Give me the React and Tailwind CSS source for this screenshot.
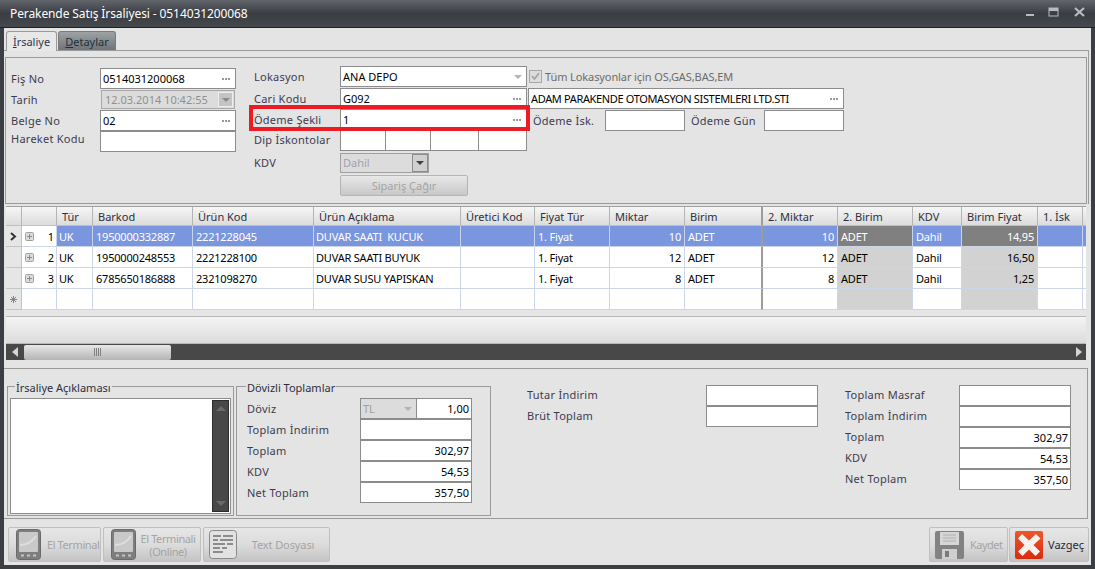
import React from 'react';

const fontCls = "font-['Noto_Sans','Liberation_Sans',sans-serif] text-[11px] leading-none";

function Dots({ color = 'bg-[#9a9a9a]' }) {
  return (
    <span className="ml-auto mr-[5px] flex gap-[1px]">
      <i className={`block w-[2px] h-[2px] ${color}`} />
      <i className={`block w-[2px] h-[2px] ${color}`} />
      <i className={`block w-[2px] h-[2px] ${color}`} />
    </span>
  );
}

function Input({ className = '', text = '', dots = false, right = false, arrow = false }) {
  return (
    <div className={`h-[21px] border border-[#8c8c8c] bg-white flex items-center pl-[2px] text-black ${className}`}>
      {right ? <span className="ml-auto mr-[2px]">{text}</span> : <span className="whitespace-nowrap">{text}</span>}
      {dots && <Dots />}
      {arrow && <span className="ml-auto mr-[4px] w-0 h-0 border-x-[4px] border-x-transparent border-t-[4px] border-t-[#b4b4b4]" />}
    </div>
  );
}

function Label({ className = '', children }) {
  return <div className={`text-[#3c3c50] tracking-[0.25px] whitespace-nowrap pb-[1px] ${className}`}>{children}</div>;
}

const cols = 'grid-cols-[16px_35px_36px_100px_121px_147px_74px_75px_75px_78px_75px_75px_49px_76px_45px_3px]';
const headers = ['', '', 'Tür', 'Barkod', 'Ürün Kod', 'Ürün Açıklama', 'Üretici Kod', 'Fiyat Tür', 'Miktar', 'Birim', '2. Miktar', '2. Birim', 'KDV', 'Birim Fiyat', '1. İsk', ''];
const rows = [
  ['1', '1950000332887', '2221228045', 'DUVAR SAATI  KUCUK', '10', '14,95'],
  ['2', '1950000248553', '2221228100', 'DUVAR SAATI BUYUK', '12', '16,50'],
  ['3', '6785650186888', '2321098270', 'DUVAR SUSU YAPISKAN', '8', '1,25'],
];

function Cell({ children, sel, right, gray, thick, className = '' }) {
  const bg = gray ? (sel ? 'bg-[#808080]' : 'bg-[#d2d2d2]') : sel ? 'bg-[#7a96de]' : 'bg-white';
  const bc = thick ? 'border-r-[2px] border-r-[#9c9c9c]' : sel ? 'border-r border-r-[#c8d4ee]' : 'border-r border-r-[#cdd6e6]';
  return (
    <div className={`h-[21px] border-b border-b-[#cdd6e6] flex items-center px-[3px] whitespace-pre overflow-hidden tracking-[-0.2px] ${bc} ${bg} ${sel ? 'text-white' : 'text-black'} ${right ? 'justify-end' : ''} ${className}`}>
      {children}
    </div>
  );
}

function Plus() {
  return (
    <svg width="9" height="9" viewBox="0 0 9 9" className="shrink-0">
      <rect x="0.5" y="0.5" width="8" height="8" rx="1" fill="#dcdcdc" stroke="#a0a0a0" />
      <path d="M2 4.500h5M4.500 2v5" stroke="#8a8a8a" />
    </svg>
  );
}

function DataRow({ r }) {
  const sel = r[0] === '1';
  return (
    <>
      <div className="h-[21px] border-r border-b border-[#c4c4c4] bg-[#e6e6e6] flex items-center justify-center">
        {sel && (
          <svg width="7" height="9" viewBox="0 0 7 9"><path d="M1 1l4 3.500L1 8" fill="none" stroke="#333" strokeWidth="2" /></svg>
        )}
      </div>
      <div className="h-[21px] border-r border-b border-[#cdd6e6] bg-white flex items-center pl-[3px] pr-[2px] text-black">
        <Plus />
        <span className="ml-auto">{r[0]}</span>
      </div>
      <Cell sel={sel} className="pl-[2px]">UK</Cell>
      <Cell sel={sel}>{r[1]}</Cell>
      <Cell sel={sel}>{r[2]}</Cell>
      <Cell sel={sel} className="pl-[2px]">{r[3]}</Cell>
      <Cell sel={sel} />
      <Cell sel={sel}>1. Fiyat</Cell>
      <Cell sel={sel} right>{r[4]}</Cell>
      <Cell sel={sel} thick>ADET</Cell>
      <Cell sel={sel} right>{r[4]}</Cell>
      <Cell sel={sel} gray>ADET</Cell>
      <Cell sel={sel}>Dahil</Cell>
      <Cell sel={sel} gray right>{r[5]}</Cell>
      <Cell sel={sel} />
      <Cell sel={sel} />
    </>
  );
}

function Device() {
  return (
    <svg width="25" height="31" viewBox="0 0 25 31" className="shrink-0">
      <rect x="0.5" y="0.5" width="24" height="30" rx="3" fill="#7e7e7e" stroke="#6a6a6a" />
      <rect x="3" y="3" width="19" height="20" rx="1" fill="#c9c9c9" />
      <path d="M4 16c6 0 12-3 16-9" stroke="#dedede" strokeWidth="2" fill="none" />
      <path d="M5 26.500h3M11 26.500h3M17 26.500h3" stroke="#c4c4c4" strokeWidth="2" />
    </svg>
  );
}

function TextDoc() {
  return (
    <svg width="28" height="29" viewBox="0 0 28 29" className="shrink-0">
      <rect x="0.5" y="0.5" width="27" height="28" rx="3" fill="#e2e2e2" stroke="#8a8a8a" />
      <path d="M4 6h8M14 6h10M4 10h5M11 10h13M4 14h12M18 14h6M4 18h7M13 18h5M4 22h10" stroke="#8c8c8c" strokeWidth="2" />
    </svg>
  );
}

function Floppy() {
  return (
    <svg width="29" height="28" viewBox="0 0 29 28" className="shrink-0">
      <path d="M2 0h25a2 2 0 0 1 2 2v24a2 2 0 0 1-2 2H2a2 2 0 0 1-2-2V2a2 2 0 0 1 2-2z" fill="#828282" />
      <rect x="5" y="1" width="19" height="13" fill="#d6d6d6" />
      <path d="M8 4h13M8 7h13M8 10h13" stroke="#b0b0b0" />
      <rect x="7" y="18" width="15" height="10" fill="#cfcfcf" />
      <rect x="10" y="20" width="4" height="6" fill="#7a7a7a" />
    </svg>
  );
}

function RedX() {
  return (
    <svg width="28" height="28" viewBox="0 0 28 28" className="shrink-0">
      <defs>
        <linearGradient id="rx" x1="0" y1="0" x2="0" y2="1">
          <stop offset="0" stopColor="#f0552a" />
          <stop offset="1" stopColor="#d92c10" />
        </linearGradient>
      </defs>
      <rect x="0" y="0" width="28" height="28" rx="2" fill="url(#rx)" />
      <path d="M7 3l7 6.500L21 3l4.500 4.500L18.500 14l6.500 6.500L20.500 25 14 18.500 7.500 25 3 20.500 9.500 14 3 7.500z" fill="#f4f1ee" />
    </svg>
  );
}

function Btn({ className = '', children }) {
  return (
    <div className={`h-[35px] border border-[#c0c0c0] rounded-[2px] bg-gradient-to-b from-[#e6e6e6] via-[#dcdcdc] to-[#c4c4c4] flex items-center shrink-0 ${className}`}>
      {children}
    </div>
  );
}

function Totals() {
  return (
    <div className="flex flex-col">
      {[['Toplam Masraf', ''], ['Toplam İndirim', ''], ['Toplam', '302,97'], ['KDV', '54,53'], ['Net Toplam', '357,50']].map(([l, v]) => (
        <div key={l} className="flex items-center">
          <Label className="w-[114px] !pb-[3px]">{l}</Label>
          <Input className="w-[112px]" text={v} right />
        </div>
      ))}
    </div>
  );
}

export default function App() {
  return (
    <div className={`w-[1095px] h-[569px] overflow-hidden flex flex-col bg-[#3b3e43] ${fontCls}`}>
      <div className="h-[28px] shrink-0 flex items-center pl-[10px] pr-[9px] bg-gradient-to-b from-[#62666c] via-[#3a3d42] to-[#45484d] border-b border-b-[#1e2024]">
        <span className="text-white text-[12px] tracking-[-0.1px]">Perakende Satış İrsaliyesi - 0514031200068</span>
        <div className="ml-auto flex items-center gap-[14px] pb-[4px]">
          <svg width="11" height="10" viewBox="0 0 11 10"><rect x="3" y="7" width="8" height="2" fill="#b8bcc2" /></svg>
          <svg width="12" height="10" viewBox="0 0 12 10"><rect x="1" y="1" width="9" height="8" fill="none" stroke="#b8bcc2" strokeWidth="1" /><rect x="1" y="1" width="9" height="3" fill="#b8bcc2" /></svg>
          <svg width="12" height="10" viewBox="0 0 12 10"><path d="M1 1l9 8M10 1L1 9" stroke="#b8bcc2" strokeWidth="2.200" /></svg>
        </div>
      </div>

      <div className="mx-[4px] h-[537px] bg-[#e4e4e4] flex flex-col">
        <div className="h-[22px] shrink-0 flex items-end pl-[2px] pt-[2px]">
          <div className="h-[20px] w-[51px] border border-b-0 border-[#9a9a9a] rounded-t-[3px] bg-[#e8e8e8] flex items-center justify-center text-[#2c3a50] relative z-10 -mb-[1px]"><span><u>İ</u>rsaliye</span></div>
          <div className="h-[19px] w-[58px] ml-[1px] border border-b-0 border-[#7a7a7a] rounded-t-[3px] bg-gradient-to-b from-[#9ea2a4] to-[#6e7478] flex items-center justify-center text-[#20303c]"><span><u>D</u>etaylar</span></div>
        </div>

        <div className="border-t border-r border-[#9a9a9a] mr-[2px] pt-[6px] pl-[1px] pr-[1px]">
          <div className="h-[147px] border border-[#9a9a9a] flex items-start">
            <div className="w-[230px] pl-[5px] pt-[10px] shrink-0 flex flex-col">
              <div className="flex items-center h-[21px]">
                <Label className="w-[89px]">Fiş No</Label>
                <Input className="w-[136px]" text="0514031200068" dots />
              </div>
              <div className="flex items-center h-[21px]">
                <Label className="w-[89px]">Tarih</Label>
                <div className="w-[134px] ml-[1px] h-[19px] border border-[#a8a8a8] bg-[#dcdcdc] flex items-center pl-[3px] text-[#909090]">
                  12.03.2014 10:42:55
                  <span className="ml-auto mr-[1px] w-[15px] h-[15px] bg-[#c4c4c4] border border-[#eeeeee] flex items-center justify-center">
                    <i className="w-0 h-0 border-x-[4px] border-x-transparent border-t-[4px] border-t-[#8a8a8a]" />
                  </span>
                </div>
              </div>
              <div className="flex items-center h-[21px]">
                <Label className="w-[89px]">Belge No</Label>
                <Input className="w-[136px]" text="02" dots />
              </div>
              <div className="flex items-start h-[21px]">
                <Label className="w-[89px] pt-[2px]">Hareket Kodu</Label>
                <Input className="w-[136px]" />
              </div>
            </div>

            <div className="ml-[18px] w-[273px] pt-[8px] shrink-0 flex flex-col">
              <div className="flex items-center h-[21px] mb-[1px]">
                <Label className="w-[86px]">Lokasyon</Label>
                <Input className="w-[187px]" text="ANA DEPO" arrow />
              </div>
              <div className="flex items-center h-[21px]">
                <Label className="w-[86px]">Cari Kodu</Label>
                <Input className="w-[187px]" text="G092" dots />
              </div>
              <div className="flex items-center h-[21px] relative">
                <Label className="w-[86px]">Ödeme Şekli</Label>
                <Input className="w-[187px]" text="1" dots />
                <div className="absolute -left-[5px] -right-[3px] -top-[4px] -bottom-[1px] border-[4px] border-[#ed1c24] pointer-events-none" />
              </div>
              <div className="flex items-center h-[21px] mb-[1px]">
                <Label className="w-[86px] !pb-[3px]">Dip İskontolar</Label>
                <div className="flex h-[21px]">
                  <Input className="w-[46px]" />
                  <Input className="w-[46px] -ml-[1px]" />
                  <Input className="w-[49px] -ml-[1px]" />
                  <Input className="w-[49px] -ml-[1px]" />
                </div>
              </div>
              <div className="flex items-center h-[21px]">
                <Label className="w-[86px]">KDV</Label>
                <div className="w-[89px] h-[20px] border border-[#a0a0a0] bg-[#dcdcdc] flex items-center pl-[2px] text-[#a0a0b0]">
                  Dahil
                  <span className="ml-auto w-[16px] h-[18px] bg-[#d0d0d0] border border-[#8c8c8c] flex items-center justify-center">
                    <i className="w-0 h-0 border-x-[4px] border-x-transparent border-t-[4px] border-t-[#404040]" />
                  </span>
                </div>
              </div>
              <div className="ml-[86px] mt-[2px] w-[128px] h-[21px] border border-[#b4b4b4] rounded-[2px] bg-gradient-to-b from-[#e8e8e8] to-[#c8c8c8] flex items-center justify-center text-[#a4a4a4]">
                Sipariş Çağır
              </div>
            </div>

            <div className="ml-[1px] w-[316px] pt-[8px] shrink-0 flex flex-col">
              <div className="flex items-center h-[21px] mb-[1px]">
                <span className="w-[13px] h-[13px] ml-[1px] border border-[#a8a8a8] bg-[#dcdcdc] flex items-center justify-center">
                  <svg width="9" height="9" viewBox="0 0 9 9"><path d="M1 4l2.500 3L8 1" fill="none" stroke="#a0a0a0" strokeWidth="1.500" /></svg>
                </span>
                <Label className="ml-[3px] !text-[#6c6c6c] !tracking-[-0.1px]">Tüm Lokasyonlar için OS,GAS,BAS,EM</Label>
              </div>
              <Input className="w-[316px] tracking-[-0.35px]" text="ADAM PARAKENDE OTOMASYON SISTEMLERI LTD.STI" dots />
              <div className="flex items-center h-[21px] mt-[1px]">
                <Label className="w-[77px] pl-[5px]">Ödeme İsk.</Label>
                <Input className="w-[80px]" />
                <Label className="w-[79px] pl-[6px]">Ödeme Gün</Label>
                <Input className="w-[80px]" />
              </div>
            </div>
          </div>
        </div>

        <div className="mt-[2px] ml-[2px] mr-[5px] h-[154px] shrink-0 border-t border-[#a0a0a0] overflow-hidden bg-[#e6e6e6]">
          <div className={`grid ${cols}`}>
            {headers.map((h, i) => (
              <div key={i} className={`h-[19px] flex items-center pl-[5px] whitespace-nowrap bg-gradient-to-b from-[#f6f6f6] to-[#dcdcdc] text-[#2c3040] border-b border-[#c0c0c0] ${i === 9 ? 'border-r-[2px] border-r-[#9c9c9c]' : 'border-r border-r-[#b4b4b4]'}`}>{h}</div>
            ))}
            {rows.map((r) => <DataRow key={r[0]} r={r} />)}
            <div className="h-[21px] border-r border-b border-[#c4c4c4] bg-[#e6e6e6] flex items-center justify-center">
              <svg width="7" height="7" viewBox="0 0 7 7"><path d="M3.500 0v7M0 3.500h7M1 1l5 5M6 1L1 6" stroke="#7a7a7a" strokeWidth="0.900" /></svg>
            </div>
            <div className="h-[21px] border-r border-b border-[#cdd6e6] bg-white" />
            <Cell /><Cell /><Cell /><Cell /><Cell /><Cell /><Cell /><Cell thick />
            <Cell /><Cell gray /><Cell /><Cell gray /><Cell /><Cell />
          </div>
          <div className="h-[6px]" />
          <div className="h-[28px] border-y border-[#b8b8b8] bg-gradient-to-b from-[#f4f4f4] to-[#dcdcdc]" />
          <div className="h-[16px] bg-[#484848] flex items-center">
            <div className="w-[18px] flex justify-center">
              <i className="w-0 h-0 border-y-[5px] border-y-transparent border-r-[6px] border-r-[#d4d4d4]" />
            </div>
            <div className="w-[147px] h-[15px] rounded-[2px] bg-gradient-to-b from-[#e8e8e8] to-[#b4b4b4] flex items-center justify-center gap-[1px]">
              <i className="block w-[1px] h-[8px] bg-[#808080]" /><i className="block w-[1px] h-[8px] bg-[#808080]" /><i className="block w-[1px] h-[8px] bg-[#808080]" /><i className="block w-[1px] h-[8px] bg-[#808080]" />
            </div>
            <div className="ml-auto w-[14px] flex justify-center">
              <i className="w-0 h-0 border-y-[5px] border-y-transparent border-l-[6px] border-l-[#d4d4d4]" />
            </div>
          </div>
        </div>

        <div className="mt-[8px] mr-[3px] h-[151px] shrink-0 border-y border-r border-[#9a9a9a] flex items-start">
          <fieldset className="ml-[3px] mt-[11px] w-[227px] h-[136px] border border-[#9a9a9a] px-[2px] pb-[1px] pt-[6px] shrink-0">
            <legend className="ml-[5px] px-[1px] h-[12px] leading-[16px] text-[#2c3040]">İrsaliye Açıklaması</legend>
            <div className="h-[116px] border border-[#8c8c8c] bg-white flex justify-end p-[1px]">
              <div className="w-[17px] h-full bg-[#484848] border border-[#2c2c2c] flex flex-col items-center justify-between py-[5px]">
                <i className="w-0 h-0 border-x-[5px] border-x-transparent border-b-[5px] border-b-[#6a6a6a]" />
                <i className="w-0 h-0 border-x-[5px] border-x-transparent border-t-[5px] border-t-[#6a6a6a]" />
              </div>
            </div>
          </fieldset>

          <fieldset className="ml-[2px] mt-[11px] w-[255px] h-[136px] border border-[#9a9a9a] pl-[10px] pt-[6px] shrink-0">
            <legend className="ml-[-1px] px-[1px] h-[12px] leading-[16px] text-[#2c3040]">Dövizli Toplamlar</legend>
            <div className="flex flex-col">
              <div className="flex items-center">
                <Label className="w-[113px]">Döviz</Label>
                <div className="w-[57px] h-[21px] border border-[#8c8c8c] bg-[#dcdcdc] flex items-center pl-[2px] text-[#a0a0a0]">
                  TL
                  <i className="ml-auto mr-[4px] w-0 h-0 border-x-[4px] border-x-transparent border-t-[4px] border-t-[#b4b4b4]" />
                </div>
                <Input className="w-[56px] -ml-[1px]" text="1,00" right />
              </div>
              {[['Toplam İndirim', ''], ['Toplam', '302,97'], ['KDV', '54,53'], ['Net Toplam', '357,50']].map(([l, v]) => (
                <div key={l} className="flex items-center">
                  <Label className="w-[113px]">{l}</Label>
                  <Input className="w-[112px]" text={v} right />
                </div>
              ))}
            </div>
          </fieldset>

          <div className="ml-[36px] mt-[16px] shrink-0 flex flex-col">
            <div className="flex items-center">
              <Label className="w-[179px] !pb-[3px]">Tutar İndirim</Label>
              <Input className="w-[112px]" />
            </div>
            <div className="flex items-center">
              <Label className="w-[179px] !pb-[3px]">Brüt Toplam</Label>
              <Input className="w-[112px]" />
            </div>
          </div>

          <div className="ml-[27px] mt-[16px] shrink-0">
            <Totals />
          </div>
        </div>

        <div className="mt-[8px] pl-[4px] pr-[2px] flex items-center">
          <Btn className="w-[93px] pl-[7px] text-[#a4a4a4]">
            <Device />
            <span className="ml-[6px] whitespace-nowrap tracking-[-0.4px]">El Terminal</span>
          </Btn>
          <Btn className="w-[98px] ml-[2px] pl-[7px] text-[#a4a4a4]">
            <Device />
            <span className="flex-1 text-center leading-[13px] pt-[1px] tracking-[-0.4px]">El Terminali<br />(Online)</span>
          </Btn>
          <Btn className="w-[127px] ml-[2px] pl-[5px] text-[#a4a4a4]">
            <TextDoc />
            <span className="flex-1 text-center tracking-[-0.1px]">Text Dosyası</span>
          </Btn>
          <Btn className="w-[79px] ml-auto pl-[5px] text-[#a4a4a4]">
            <Floppy />
            <span className="ml-[6px] tracking-[-0.5px]">Kaydet</span>
          </Btn>
          <Btn className="w-[80px] ml-[1px] pl-[5px] text-[#20283a] border-[#8c8c8c]">
            <RedX />
            <span className="ml-[5px]">Vazgeç</span>
          </Btn>
        </div>
      </div>
    </div>
  );
}
